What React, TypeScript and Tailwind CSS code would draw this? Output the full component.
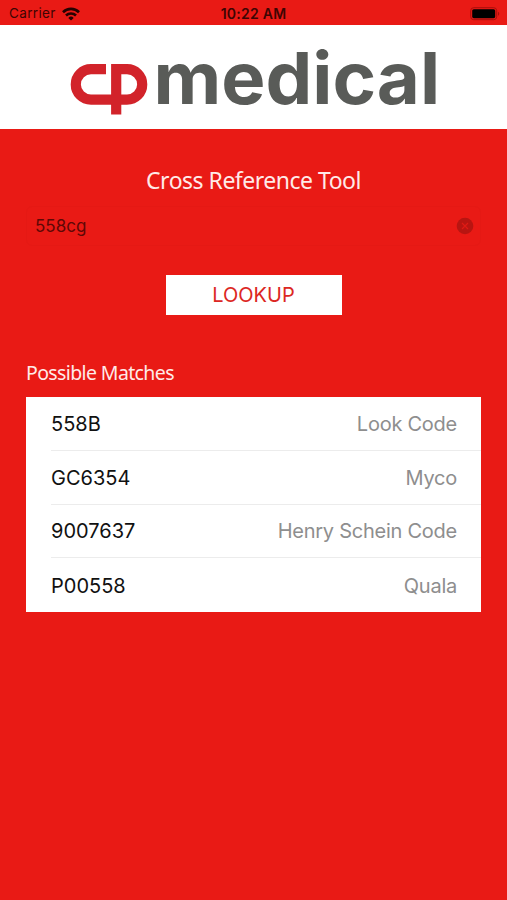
import React from 'react';

const matches = [
  { code: '558B', source: 'Look Code' },
  { code: 'GC6354', source: 'Myco' },
  { code: '9007637', source: 'Henry Schein Code' },
  { code: 'P00558', source: 'Quala' },
];

const StatusBar = () => (
  <div className="relative h-[25px] flex items-center justify-between pl-[9px] pr-[7px] pt-[3px] text-[#3d0503]">
    <div className="flex items-center gap-[6px]">
      <span className="text-[13.5px] leading-none tracking-[0.35px]">Carrier</span>
      <svg width="18" height="14" viewBox="0 0 18 14" fill="none" stroke="#260201" strokeWidth="2.6">
        <path d="M1 5.2a11.4 11.4 0 0 1 16 0" />
        <path d="M4 8.5a7.2 7.2 0 0 1 10 0" />
        <path d="M9 13.6 6.3 10.9a3.8 3.8 0 0 1 5.4 0z" fill="#260201" stroke="none" />
      </svg>
    </div>
    <span className="absolute left-0 right-0 text-center text-[14px] leading-none font-semibold tracking-[0.25px]">
      10:22 AM
    </span>
    <svg width="30" height="14" viewBox="0 0 30 14">
      <rect x="0.7" y="0.7" width="26" height="12" rx="3" fill="none" stroke="#a90f0b" strokeWidth="1" />
      <rect x="2.2" y="2.2" width="23" height="9" rx="1.6" fill="#000" />
      <path d="M28 4.7v4a2.2 2.2 0 0 0 0-4z" fill="#a90f0b" />
    </svg>
  </div>
);

const Logo = () => (
  <svg width="507" height="104" viewBox="0 25 507 104" role="img" aria-label="cp medical">
    <path
      d="M106 69.2H91a15.2 15.2 0 0 0 0 30.4h36a15.2 15.2 0 0 0 0-30.4h-10.8v45.3"
      fill="none"
      stroke="#d2232a"
      strokeWidth="10.2"
    />
    <text
      x="153.5"
      y="104.3"
      fontFamily="Inter, sans-serif"
      fontSize="72"
      fontWeight="700"
      fill="#595b58"
      textLength="286.5"
      lengthAdjust="spacingAndGlyphs"
    >
      medical
    </text>
  </svg>
);

const App = () => {
  return (
    <div className="w-full h-[900px] bg-[#e91a15] font-['Inter',sans-serif] overflow-hidden">
      <StatusBar />

      <header className="h-[104px] bg-white">
        <Logo />
      </header>

      <main className="px-[26px] pt-[36px] flex flex-col">
        <h1 className="text-center text-[23px] leading-[30px] tracking-[-0.5px] text-[#ffeae8] font-['Noto_Sans',sans-serif]">
          Cross Reference Tool
        </h1>

        {/* Search field */}
        <div className="mt-[11px] h-[40px] flex items-center justify-between rounded-md border border-[#e51914] pl-2 pr-[6px]">
          <span className="pt-[2px] text-[17px] text-[#5e0806]">558cg</span>
          <svg width="18" height="18" viewBox="0 0 18 18">
            <circle cx="9" cy="9" r="8.3" fill="#b81511" />
            <path d="M6 6l6 6M12 6l-6 6" stroke="#e01a15" strokeWidth="1.2" />
          </svg>
        </div>

        <button className="mt-[29px] self-center w-[176px] h-[40px] bg-white text-[#dc2723] text-[20px] leading-none">
          LOOKUP
        </button>

        <h2 className="mt-[44px] text-[19.5px] leading-[28px] tracking-[-0.62px] text-[#ffeae8] font-['Noto_Sans',sans-serif]">
          Possible Matches
        </h2>

        {/* Results */}
        <ul className="mt-[10px] h-[215px] bg-white pl-[25px]">
          {matches.map((match, index) => (
            <li
              key={match.code}
              className={`h-[53.75px] flex items-center justify-between pr-6 text-[20px] ${
                index < matches.length - 1 ? 'border-b border-[#ececec]' : ''
              }`}
            >
              <span className="pt-px text-[#111]">{match.code}</span>
              <span className="pt-px tracking-[-0.25px] text-[#8e8e8e]">{match.source}</span>
            </li>
          ))}
        </ul>
      </main>
    </div>
  );
};

export default App;
